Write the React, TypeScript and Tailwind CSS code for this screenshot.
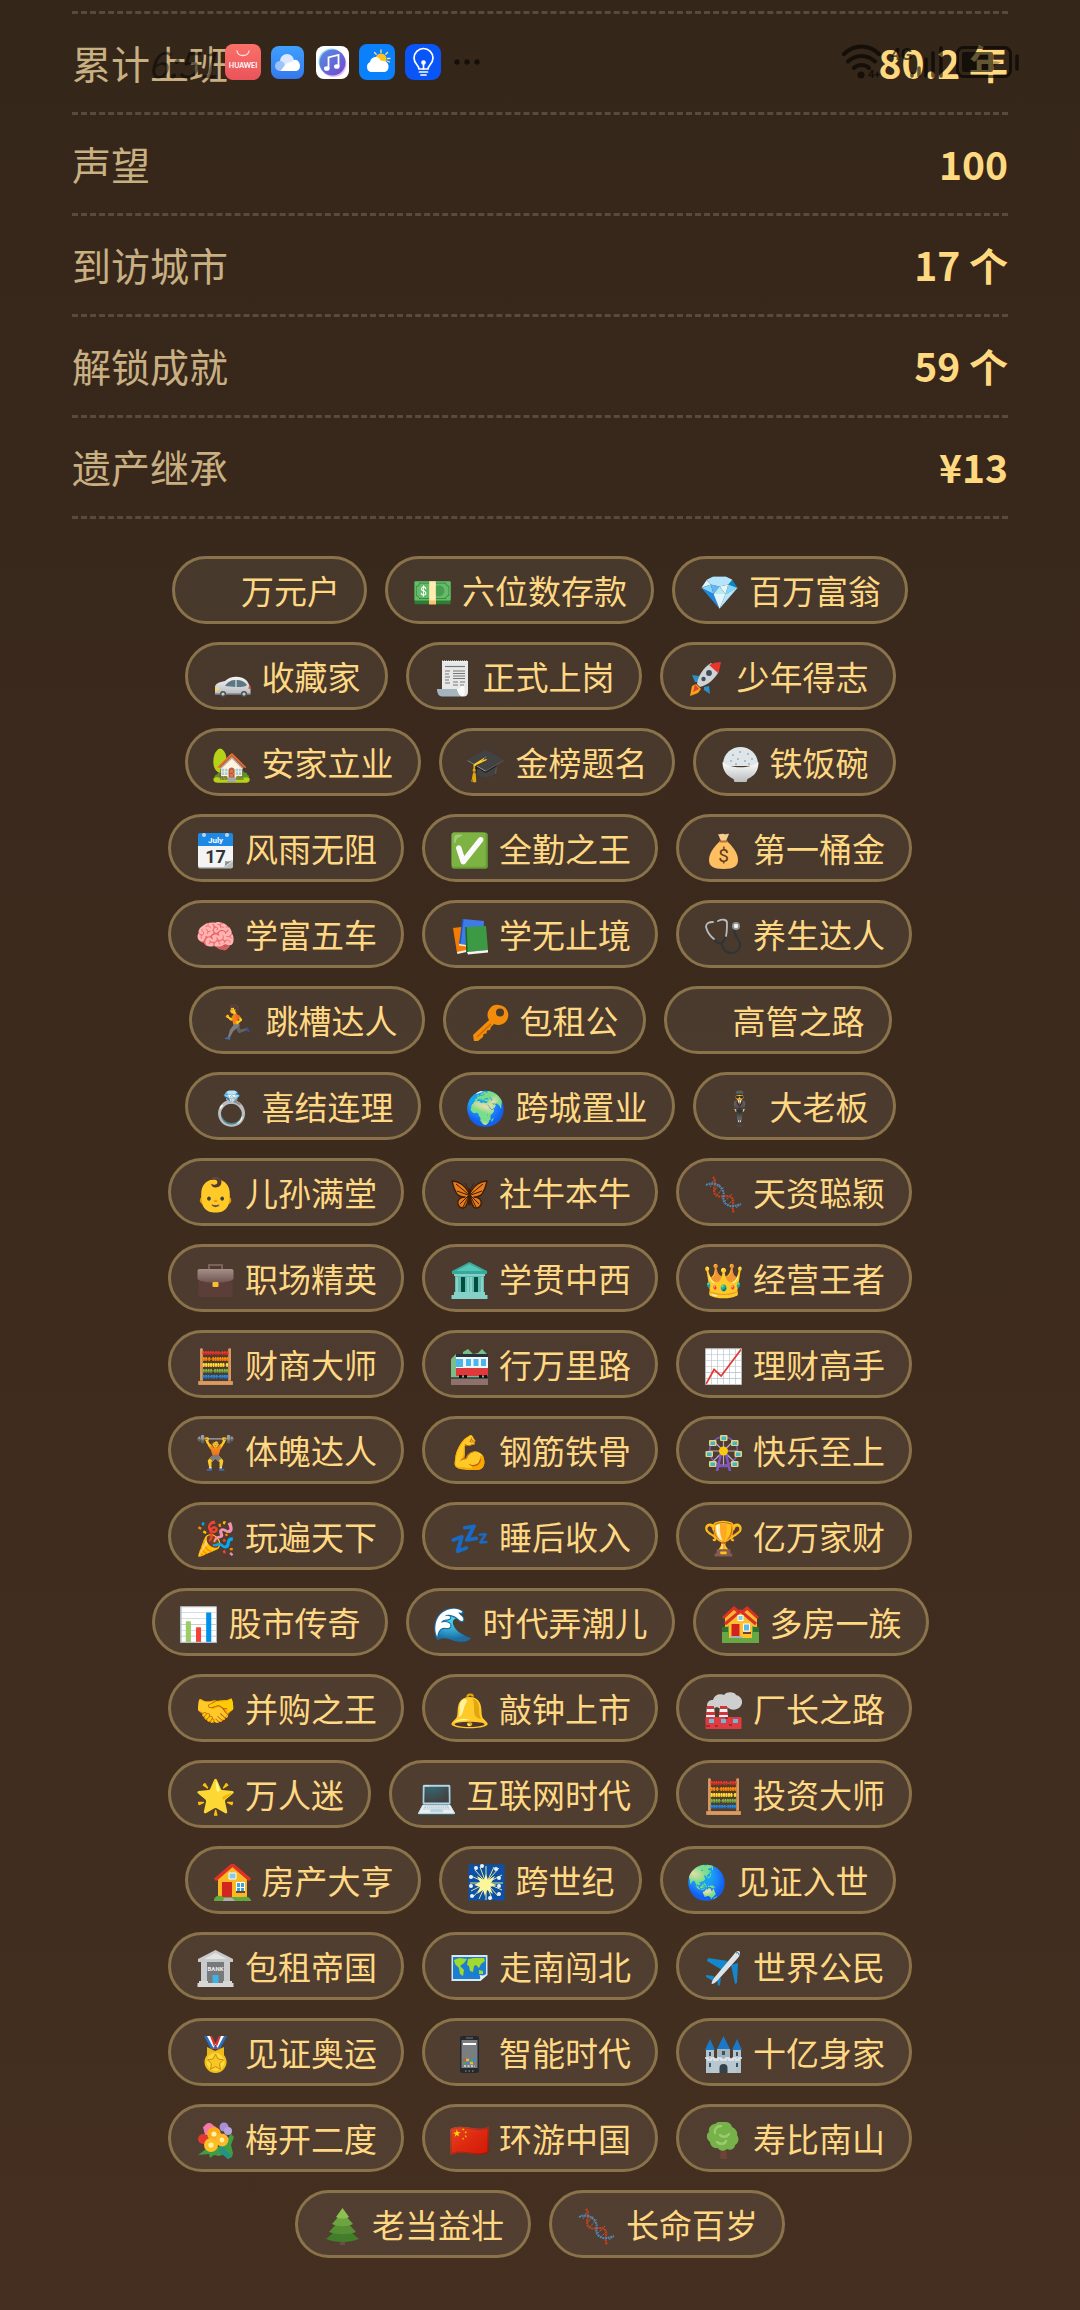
import type { ReactNode } from 'react';

const stats: [string, string][] = [
  ['累计上班', '80.2 年'],
  ['声望', '100'],
  ['到访城市', '17 个'],
  ['解锁成就', '59 个'],
  ['遗产继承', '¥13'],
];

const Art = ({ children }: { children: ReactNode }) => (
  <svg viewBox="0 0 37 37" className="size-[37px]" aria-hidden="true">
    {children}
  </svg>
);

const CarIcon = () => (
  <Art>
    <defs>
      <linearGradient id="car" x1="0" y1="0" x2="0" y2="1">
        <stop offset="0" stopColor="#f5f5f5" />
        <stop offset="1" stopColor="#b9bcc0" />
      </linearGradient>
    </defs>
    <path d="M1 34v-7c0-3 4-5 10-6 5-5 15-6 21-1 2 2 3 4 4 7l.5 2v5z" fill="url(#car)" />
    <path d="M11 26c3-5 7-6 11-6 5 0 8 1 11 5-2 2-7 2-11 2z" fill="#5c7683" />
    <path d="M22 20v7" stroke="#d9dcdf" strokeWidth="1.3" />
    <path d="M1 28l4-1v3l-4 1z" fill="#f6dc67" />
    <path d="M35 25l1.500 1v3h-2z" fill="#e05545" />
    <path d="M1 34h35.500" stroke="#85898d" strokeWidth="1.500" />
    <circle cx="9" cy="34" r="3" fill="#4d4f52" />
    <circle cx="9" cy="34" r="1.600" fill="#c9cbcd" />
    <circle cx="30" cy="34" r="3" fill="#4d4f52" />
    <circle cx="30" cy="34" r="1.600" fill="#c9cbcd" />
  </Art>
);

const PaperIcon = () => (
  <Art>
    <path d="M7 1h26v31c0 3-2 4.500-4 4.500L7 30z" fill="#e8e8e8" />
    <path d="M7 1h26" stroke="#fff" strokeWidth="1" strokeDasharray="1 1" />
    <path d="M2 29h20c1 4 3 7 7 7.500H7c-3 0-5-3-5-7.500z" fill="#a5b5be" />
    <path d="M22 29c2 0 5-2 5-6 3 2 4 12 1 13.500-4-.5-5-3.500-6-7.500z" fill="#fafafa" />
    <path d="M10 6.500h20" stroke="#777" strokeWidth="1.200" />
    <path d="M10 11h5M10 14h4M10 17h5M10 20h4M10 23h5M18 11h12M18 13.500h12M18 16h12M18 18.500h12M18 22h5M25 22h5M18 25h5M25 25h4" stroke="#777" strokeWidth="1" />
  </Art>
);

const RocketIcon = () => (
  <Art>
    <g transform="translate(-2 0)">
      <path d="M3 36l2-10 4-2 5 5-3 4z" fill="#f9a01b" />
      <path d="M6 32l2-8 4 5z" fill="#e2452f" />
      <path d="M12 16l-7-1 3 7h3zM22 26l1 8-6-4v-3z" fill="#2b8fc9" />
      <path d="M10 24c1-8 6-16 14-21l8 8c-4 8-11 14-19 16z" fill="#cfd3d6" />
      <path d="M22 5c4-2 8-3 12-3-1 4-1 7-3 11z" fill="#e8352c" />
      <circle cx="22" cy="13" r="2.900" fill="#3f4d56" />
      <circle cx="16.500" cy="19" r="2.200" fill="#3f4d56" />
    </g>
  </Art>
);

const RiceIcon = () => (
  <Art>
    <defs>
      <linearGradient id="bowl" x1="0" y1="0" x2="0" y2="1">
        <stop offset="0" stopColor="#ffffff" />
        <stop offset="1" stopColor="#b9bbbd" />
      </linearGradient>
    </defs>
    <path d="M1 17C2 7 10 1 18.500 1S35 7 36 17v3H1z" fill="#dfe6ea" />
    <path d="M10 9h2M17 6h2M25 8h2M8 15h2M15 13h2M22 15h2M29 13h2M13 18h2M26 18h2" stroke="#9fb0ba" strokeWidth="1.500" />
    <path d="M.5 16c8 7 28 7 36 0 0 9-4 14-11 17l-1 3h-12l-1-3C5 30 .5 25 .5 16z" fill="url(#bowl)" />
  </Art>
);

const CalendarIcon = () => (
  <Art>
    <rect x="1" y="3" width="35" height="33.500" rx="2" fill="#b7bbbd" />
    <path d="M1 13h35v16l-8 6H3a2 2 0 0 1-2-2z" fill="#f4f4f4" />
    <path d="M36 28l-9 7c2-3 1-5 1-6 3 1 6 0 8-1z" fill="#8b9093" />
    <path d="M1 14V3a2 2 0 0 1 2-2h31a2 2 0 0 1 2 2v11z" fill="#1e88e5" />
    <circle cx="7" cy="3" r="2" fill="#b7d7ee" />
    <circle cx="30" cy="3" r="2" fill="#b7d7ee" />
    <text x="18.500" y="10.500" textAnchor="middle" fontSize="8" fontWeight="700" fill="#fff" fontFamily="Roboto, sans-serif">July</text>
    <text x="18.500" y="31" textAnchor="middle" fontSize="18" fontWeight="700" fill="#333" fontFamily="Roboto, sans-serif">17</text>
  </Art>
);

const MoneyBagIcon = () => (
  <Art>
    <path d="M13 2c2 1 4-1 6 0s4-1 5 0l-3 7h-5z" fill="#f7cd94" />
    <path d="M15 9h7c4 4 11 11 11 19 0 6-4 9-14.500 9S4 34 4 28C4 20 11 13 15 9z" fill="#fdbf62" />
    <path d="M14.500 9.500h8" stroke="#b3742c" strokeWidth="2" />
    <text x="18.500" y="30" textAnchor="middle" fontSize="19" fill="#5d3c1c" fontFamily="Roboto, sans-serif">$</text>
  </Art>
);

const BooksIcon = () => (
  <Art>
    <path d="M2 10l8-1 6 24-10 2z" fill="#f57c00" />
    <path d="M6 34l9-2 .5 2-9 2z" fill="#eee" />
    <path d="M12 1l21 2-1 25-24-2z" fill="#3f7be8" />
    <path d="M8 26l7 1v1.500l-7-1z" fill="#eee" />
    <path d="M9 25l3-24" stroke="#2557b7" strokeWidth="1.500" />
    <path d="M15 9l20-1 2 24-21 2z" fill="#3c9a44" />
    <path d="M16 34l21-2v2.500L17 36.500z" fill="#f4f4f4" />
    <path d="M15 9l1 25" stroke="#1b6527" strokeWidth="1.500" />
  </Art>
);

const StethoscopeIcon = () => (
  <Art>
    <g fill="none" strokeLinecap="round">
      <path d="M9 21c3 6 10 6 12-3M16 25c2 6 4 10 10 10 7 0 11-6 8-12-2-4-5-6-5-14" stroke="#2f3437" strokeWidth="2.200" />
      <path d="M8 4C4 4 1 5 1 9c1 4 4 9 8 12M13 3c4-2 9-2 9 2 0 5 0 9-1 13" stroke="#b8bcbf" strokeWidth="1.800" />
      <circle cx="31" cy="8" r="4" fill="#8e9396" />
      <circle cx="31" cy="8" r="2.200" fill="#f2f2f2" />
    </g>
  </Art>
);

const KeyIcon = () => (
  <Art>
    <path d="M27 1a10 10 0 1 1-5 19l-3 3-1 3-3 .5-.5 3-3 .5-.5 3-5 4-4 .2L1 31l16-15a10 10 0 0 1 10-15z" fill="#f28c0a" />
    <circle cx="28" cy="8.500" r="4" fill="#4b3a2d" />
    <path d="M5 33l14-13" stroke="#c66a00" strokeWidth="1.200" />
  </Art>
);

const ButterflyIcon = () => (
  <Art>
    <g stroke="#3d1c0b" strokeWidth="1.300" strokeLinejoin="round">
      <path d="M18 17C14 9 7 5 1 5c1 5 3 10 5 13 2 2 5 3 8 3-5 0-8 3-7 7 1 3 3 4 5 4 4 0 5-7 6-13zM19 17c4-8 11-12 17-12-1 5-3 10-5 13-2 2-5 3-8 3 5 0 8 3 7 7-1 3-3 4-5 4-4 0-5-7-6-13z" fill="#e87c18" />
      <path d="M17 18L5 8M17 19L6 15M17 20l-8 8M17 21l-5 10M20 18L32 8M20 19l11-4M20 20l8 8M20 21l5 10" fill="none" strokeWidth="1" />
      <path d="M18.500 14v14" strokeWidth="2.600" strokeLinecap="round" />
      <path d="M18 14l-4-7M19 14l4-7" fill="none" strokeWidth=".8" />
    </g>
  </Art>
);

const DnaIcon = () => (
  <Art>
    <g fill="none" strokeWidth="2.200" strokeDasharray="2 .7">
      <path d="M5 11L9 4M10 14l5-6M12 19l7-8M20 25l7-7M23 29l6-6M31 32l4-3" stroke="#a07867" strokeWidth=".8" />
      <path d="M8 1c5 5-1 12 2 17 4 6 13-1 17 4 3 4-1 10 2 15" stroke="#cc3d1c" />
      <path d="M1 9c6-3 13-1 16 4 4 6-1 9 3 14 4 4 9 4 16 1" stroke="#4a86b8" />
    </g>
  </Art>
);

const BriefcaseIcon = () => (
  <Art>
    <defs>
      <linearGradient id="flap" x1="0" y1="0" x2="0" y2="1">
        <stop offset="0" stopColor="#a78f89" />
        <stop offset="1" stopColor="#6f5650" />
      </linearGradient>
    </defs>
    <path d="M12 8V3h13v5" fill="none" stroke="#7a615a" strokeWidth="2" />
    <path d="M1.500 13h34v20a2 2 0 0 1-2 2h-30a2 2 0 0 1-2-2z" fill="#5b3e38" />
    <path d="M.5 9a2 2 0 0 1 2-2h32a2 2 0 0 1 2 2v8c-6 5-30 5-36 0z" fill="url(#flap)" />
    <rect x="15.500" y="20" width="6" height="5" rx="1" fill="#fbc02d" />
  </Art>
);

const MuseumIcon = () => (
  <Art>
    <rect x="4" y="12" width="29" height="20" fill="#64bdb2" />
    <path d="M10 15h4v16h-4zM23 15h4v16h-4z" fill="#004d40" />
    <path d="M18.500 0L36 9v3H1V9z" fill="#35aa9c" />
    <path d="M18.500 2L32 9H5z" fill="#58c4b7" />
    <path d="M3 12h31v2H3zM3 30h31v3H3zM.5 33h36v4H.5z" fill="#85d0c7" />
    <path d="M6 15v15M17 15v15M20 15v15M31 15v15" stroke="#a4dfd8" strokeWidth="1.200" />
  </Art>
);

const TrainIcon = () => (
  <Art>
    <path d="M0 11l5-5 7 3V4l5-3 5 5 5-1 4-4 5 5v24H0z" fill="#79bd87" />
    <path d="M5 6h32v3H5z" fill="#26323a" />
    <path d="M5 9h32v12H5z" fill="#f4f6f6" />
    <path d="M5 11h7v8H5zM15 11h5v7h-5zM22.500 11h5v7h-5zM30 11h5v7h-5z" fill="#4cb5ee" />
    <path d="M5 20h32v8H5z" fill="#e0393c" />
    <path d="M0 30h37v7H0z" fill="#8f716b" />
    <path d="M0 30h37" stroke="#333e44" strokeWidth="1.500" />
    <path d="M8 28.500h3M13 28.500h3M28 28.500h3M33 28.500h3" stroke="#111" strokeWidth="3" />
  </Art>
);

const WheelIcon = () => (
  <Art>
    <circle cx="18.500" cy="17" r="14" fill="none" stroke="#7f57b5" strokeWidth="1.600" />
    <path d="M18.500 3v28M4.500 17h28M8.500 7l20 20M28.500 7l-20 20" stroke="#b9a6d2" strokeWidth="1.200" />
    <path d="M16 20l-4 17M21 20l4 17M14 32h9" stroke="#8155bd" strokeWidth="2.600" />
    {[[15, 1], [26, 6], [29.500, 17], [26, 27], [4, 6], [0.5, 17], [4, 27]].map(([x, y]) => (
      <g key={`${x}-${y}`}>
        <rect x={x} y={y} width="7.500" height="6" rx="1" fill="#e2d588" />
        <rect x={x + 1.5} y={y + 1.5} width="4.500" height="3.500" fill="#42b7bd" />
      </g>
    ))}
    <circle cx="18.500" cy="17" r="4.500" fill="#fdc90c" />
  </Art>
);

const HouseIcon = () => (
  <Art>
    <path d="M4 14L18.500 2 33 14v20H4z" fill="#fbb825" />
    <path d="M1 16L18.500 1 36 16" fill="none" stroke="#df3226" strokeWidth="3.500" />
    <rect x="8" y="18" width="10" height="16" fill="#d3261f" />
    <rect x="22" y="18" width="9" height="10" fill="#fff" />
    <path d="M23 19h3v4h-3zM27 19h3v4h-3zM23 24h3v3h-3zM27 24h3v3h-3z" fill="#3aa5dd" />
    <path d="M22 28h9" stroke="#6d4432" strokeWidth="2" />
    <path d="M15 9h7v6h-7z" fill="#7fcdea" stroke="#fff" />
    <path d="M0 36c1-5 6-5 9-3h20c3-1 7 0 8 3v1H0z" fill="#63a83c" />
    <path d="M10 34h8l3 3H9z" fill="#aab0b3" />
  </Art>
);

const HousesIcon = () => (
  <Art>
    <path d="M3 10l9-8 7 5 7-5 9 8v16H3z" fill="#f8b62b" />
    <path d="M1 12L12 2l6 5M36 12L25 2l-6 5" fill="none" stroke="#d93125" strokeWidth="3" />
    <path d="M0 22l7-2v8h23v-8l7 2v15H0z" fill="#66a944" />
    <path d="M0 21h6v5H0zM31 21h6v5h-6z" fill="#2e7131" />
    <path d="M7 16L18.500 6 30 16v16H7z" fill="#fec02e" />
    <path d="M3 18L18.500 5 34 18" fill="none" stroke="#d93125" strokeWidth="3" />
    <rect x="9.500" y="18" width="8" height="13" fill="#d0251e" />
    <rect x="21.500" y="18" width="6" height="7" fill="#5cbbe5" stroke="#fff" />
    <rect x="16" y="9.500" width="5" height="5" fill="#7fcdea" stroke="#fff" />
    <path d="M21 27h8" stroke="#6d4432" strokeWidth="2" />
    <path d="M9 30h10l2 2H8z" fill="#aab0b3" />
  </Art>
);

const FactoryIcon = () => (
  <Art>
    <path d="M2 14c0-5 3-6 6-6 2-7 9-6 11-5 3-4 11-3 12 0 6 1 8 8 4 12-4 4-10 3-13 0-5 3-8 1-10 0-4 2-9 2-10-1z" fill="#cfcfcf" />
    <path d="M2 14h7l1 11H1zM15 14h7l1 11h-9z" fill="#f4f1f1" />
    <path d="M2 14h7v3H2zM1 20h9v3H1zM15 14h7v3h-7zM14 20h9v3h-9z" fill="#cf353b" />
    <rect x=".5" y="25" width="36" height="12" rx="1" fill="#df3c42" />
    <path d="M4 27h5v4H4zM16 27h5v4h-5zM28 27h5v4h-5z" fill="#6fb7dc" />
    <path d="M10 34h3M20 26h3M24 33h3M1 34h4" stroke="#9e1f28" strokeWidth="1.300" />
  </Art>
);

const SparklerIcon = () => (
  <Art>
    <rect x=".5" y=".5" width="36" height="36" fill="#0c50a8" />
    <path d="M18 2v34M2 19h33M7 6l23 26M31 4L5 33M12 3l12 32M26 3L11 35M3 12l31 14M34 11L3 27" stroke="#e8e690" strokeWidth="1" />
    <path d="M18 10l2 6 7-4-4 7 6 2-7 2 3 7-6-4-2 6-2-6-6 4 3-7-6-2 6-3-3-6 7 4z" fill="#fbf59b" />
    {[[8, 4], [28, 5], [3, 13], [31, 14], [3, 22], [31, 22], [4, 32], [31, 30], [22, 34], [14, 2]].map(([x, y]) => (
      <circle key={`${x}-${y}`} cx={x} cy={y} r="2" fill="#e9f4ff" />
    ))}
  </Art>
);

const BankIcon = () => (
  <Art>
    <path d="M18.500 0L36 9v3H1V9z" fill="#c7c9ca" />
    <path d="M18.500 3L30 9H7z" fill="#e2e3e3" />
    <rect x="4" y="12" width="29" height="21" fill="#77797b" />
    <path d="M4 12h6v20H4zM27 12h6v20h-6z" fill="#c9cbcc" />
    <text x="18.500" y="21" textAnchor="middle" fontSize="6" fontWeight="700" fill="#eee" fontFamily="Roboto, sans-serif">BANK</text>
    <rect x="15.500" y="25" width="6" height="8" fill="#41b2e6" />
    <path d="M2 31h9v3H2zM26 31h9v3h-9zM.5 33h36v4H.5z" fill="#d6d8d8" />
  </Art>
);

const MapIcon = () => (
  <Art>
    <path d="M.5 5h36v20l-7 6H.5z" fill="#d7e8f4" />
    <path d="M2 7h33v17l-6 5H2z" fill="#1c7ed0" />
    <path d="M3 10l5-2 8 1-3 4-4 3 4 4-1 6-3-2-1-6-4-4zM17 9l6-1h10l1 3-4 3-2 4-3-3-2 1-1 6-3-1-1-5-2-1zM28 20l4 1v3h-4z" fill="#a2d92d" />
    <path d="M36.500 24l-8 7c1-3 1-4 0-6 4 1 6 0 8-1z" fill="#eaf1f5" />
  </Art>
);

const PlaneIcon = () => (
  <Art>
    <path d="M23 11L3 8l-1 3 15 9zM26 15l4 19 2-1 1-20zM9 26l-8-1v2l7 4zM12 29l1 7 2-1 1-7z" fill="#1587cc" />
    <path d="M30 3c3-3 5-2 5 0s-1 4-3 6L13 30c-3 3-5 4-6 4s0-3 2-6z" fill="#dce4e9" />
    <path d="M31 3c2-1 3 0 3 2" stroke="#2d6b90" strokeWidth="1" fill="none" />
  </Art>
);

const MedalIcon = () => (
  <Art>
    <path d="M7 0h6l7 13h-6z" fill="#276fc0" />
    <path d="M30 0h-6l-7 13h6z" fill="#276fc0" />
    <path d="M10 0h4l7 13h-4zM27 0h-4l-7 13h4z" fill="#fff" />
    <path d="M13 0h2l6 13h-3zM24 0h-2l-6 13h3z" fill="#dc3434" />
    <path d="M10 11l8 4 9-4v8H10z" fill="#eeb818" />
    <circle cx="18.500" cy="26" r="11" fill="#f2bd18" />
    <circle cx="18.500" cy="26" r="9" fill="#fbd83b" />
    <path d="M18.500 18l2.500 5 5.500.8-4 4 1 5.500-5-2.600-5 2.600 1-5.500-4-4 5.500-.8z" fill="#f9c722" stroke="#c98a13" />
  </Art>
);

const PhoneIcon = () => (
  <Art>
    <rect x="9" y="0" width="19" height="37" rx="2.500" fill="#26292b" />
    <rect x="10.500" y="4" width="16" height="28" fill="#7b7e80" />
    <path d="M12 7h13v2H12z" fill="#fff" />
    <path d="M15 2h7" stroke="#777" strokeWidth="1" />
    <path d="M12 24h3" stroke="#e34b3c" strokeWidth="2.500" />
    <path d="M15 24h3M19 27h3" stroke="#f2b632" strokeWidth="2.500" />
    <path d="M19 24h3M12 27h3" stroke="#3ea85a" strokeWidth="2.500" />
    <path d="M22 24h3M15.500 27h3" stroke="#3b88dd" strokeWidth="2.500" />
    <path d="M13 30h11" stroke="#ddd" strokeWidth="1.500" strokeDasharray="2 1.500" />
    <path d="M14 35h9" stroke="#999" strokeWidth="1" strokeDasharray="1.500 2" />
  </Art>
);

const CastleIcon = () => (
  <Art>
    <path d="M1 13h8v24H1zM28 13h8v24h-8z" fill="#b3c3cc" />
    <path d="M12 13h13v24H12z" fill="#a0b3bd" />
    <path d="M6 22h25v15H6z" fill="#b9c8d0" />
    <path d="M0 14L5 3l5 11zM12 13l6.500-13L25 13zM27 14l5-11 5 11z" fill="#1a78c8" />
    <path d="M0 22h3v2h3v-2h3v2h4v-2h3v2h5v-2h3v2h4v-2h3v2h3v-2h3" fill="none" stroke="#e1e9ed" strokeWidth="1.500" />
    <path d="M4 16h2v4H4zM17 15h3v4h-3zM31 16h2v4h-2zM4 27h2v4H4zM31 27h2v4h-2z" fill="#3a5361" />
    <path d="M14.500 37v-5a4 4 0 0 1 8 0v5z" fill="#33434c" />
  </Art>
);

const BouquetIcon = () => (
  <Art>
    <path d="M1 33l8-6 16-3 9-12 3 3-3 8 2 8-1 4-4 2-3-5-6 2-5-1-4 3-1-4z" fill="#3f9d45" />
    <path d="M24 23l11 11-4 3-9-7z" fill="#249384" />
    <circle cx="12" cy="6" r="5" fill="#f0639a" />
    <path d="M6 5l6-4 7 4-2 8H8z" fill="#f37aa8" />
    <circle cx="27" cy="5" r="4.500" fill="#a98ed8" />
    <circle cx="31" cy="9" r="4" fill="#b7a2e0" />
    <circle cx="6" cy="17" r="5" fill="#e2382f" />
    <circle cx="17" cy="12" r="7" fill="#fca91b" />
    <circle cx="25" cy="18" r="6.500" fill="#fdb92b" />
    <circle cx="14" cy="23" r="7" fill="#fdbf25" />
    <circle cx="17" cy="12" r="2.600" fill="#fff3a5" />
    <circle cx="25" cy="18" r="2.400" fill="#fff3a5" />
    <circle cx="14" cy="23" r="2.600" fill="#fff3a5" />
  </Art>
);

const TreeIcon = () => (
  <Art>
    <path d="M16 23h5l1 14h-7z" fill="#6d4336" />
    <path d="M18 0c6-1 9 3 9 5 4 2 6 5 5 8 3 4 1 9-2 10 0 4-5 6-8 4-3 3-8 2-9-1-5 1-8-3-8-6-4-3-4-8-1-10-1-5 3-8 6-8 2-2 5-3 8-2z" fill="#76b14a" />
    <path d="M16 4c-4 0-7 3-6 7M24 12c-3 4-7 3-9 1M12 20c3 3 8 2 9-1" fill="none" stroke="#9bcb6b" strokeWidth="2.500" strokeLinecap="round" />
  </Art>
);

const PineIcon = () => (
  <Art>
    <path d="M16 30h5v7h-5z" fill="#6d4c41" />
    <path d="M18.500 17L35 31c-9 4-24 4-33 0z" fill="#427d2a" />
    <path d="M18.500 9L32 24c-8 3-19 3-27 0z" fill="#568f33" />
    <path d="M18.500 4L29 16c-6 3-15 3-21 0z" fill="#6ca540" />
    <path d="M18.500 0L25 9c-4 2-9 2-13 0z" fill="#8cc152" />
  </Art>
);

const BlankIcon = () => <span className="w-[42px]" />;

const Emoji = ({ children }: { children: ReactNode }) => (
  <span className="w-[50px] pt-1 font-['Noto_Color_Emoji',sans-serif]">{children}</span>
);

type Badge = [ReactNode, string];

const badges: Badge[] = [
  [null, '万元户'],
  ['💵', '六位数存款'],
  ['💎', '百万富翁'],
  [<CarIcon />, '收藏家'],
  [<PaperIcon />, '正式上岗'],
  [<RocketIcon />, '少年得志'],
  ['🏡', '安家立业'],
  ['🎓', '金榜题名'],
  [<RiceIcon />, '铁饭碗'],
  [<CalendarIcon />, '风雨无阻'],
  ['✅', '全勤之王'],
  [<MoneyBagIcon />, '第一桶金'],
  ['🧠', '学富五车'],
  [<BooksIcon />, '学无止境'],
  [<StethoscopeIcon />, '养生达人'],
  ['🏃', '跳槽达人'],
  [<KeyIcon />, '包租公'],
  [null, '高管之路'],
  ['💍', '喜结连理'],
  ['🌍', '跨城置业'],
  ['🕴️', '大老板'],
  ['👶', '儿孙满堂'],
  [<ButterflyIcon />, '社牛本牛'],
  [<DnaIcon />, '天资聪颖'],
  [<BriefcaseIcon />, '职场精英'],
  [<MuseumIcon />, '学贯中西'],
  ['👑', '经营王者'],
  ['🧮', '财商大师'],
  [<TrainIcon />, '行万里路'],
  ['📈', '理财高手'],
  ['🏋️', '体魄达人'],
  ['💪', '钢筋铁骨'],
  [<WheelIcon />, '快乐至上'],
  ['🎉', '玩遍天下'],
  ['💤', '睡后收入'],
  ['🏆', '亿万家财'],
  ['📊', '股市传奇'],
  ['🌊', '时代弄潮儿'],
  [<HousesIcon />, '多房一族'],
  ['🤝', '并购之王'],
  ['🔔', '敲钟上市'],
  [<FactoryIcon />, '厂长之路'],
  ['🌟', '万人迷'],
  ['💻', '互联网时代'],
  ['🧮', '投资大师'],
  [<HouseIcon />, '房产大亨'],
  [<SparklerIcon />, '跨世纪'],
  ['🌏', '见证入世'],
  [<BankIcon />, '包租帝国'],
  [<MapIcon />, '走南闯北'],
  [<PlaneIcon />, '世界公民'],
  [<MedalIcon />, '见证奥运'],
  [<PhoneIcon />, '智能时代'],
  [<CastleIcon />, '十亿身家'],
  [<BouquetIcon />, '梅开二度'],
  ['🇨🇳', '环游中国'],
  [<TreeIcon />, '寿比南山'],
  [<PineIcon />, '老当益壮'],
  [<DnaIcon />, '长命百岁'],
];

function BadgeIcon({ icon }: { icon: ReactNode }) {
  if (icon === null) return <BlankIcon />;
  if (typeof icon === 'string') return <Emoji>{icon}</Emoji>;
  return <span className="w-[50px] pt-1 pl-[2px]">{icon}</span>;
}

function StatusBar() {
  return (
    <div className="absolute inset-x-0 top-0 flex h-[124px] items-center justify-between pr-[60px] pl-[148px]">
      <div className="flex items-center">
        <span className="w-[77px] text-[36px] leading-none text-black/50 italic">6:51</span>
        <div className="flex items-center gap-[10px]">
          <svg viewBox="0 0 36 36" className="size-9">
            <defs>
              <linearGradient id="store" x1="0" y1="0" x2="0" y2="1">
                <stop offset="0" stopColor="#fb7069" />
                <stop offset="1" stopColor="#e9545b" />
              </linearGradient>
            </defs>
            <rect width="36" height="36" rx="8" fill="url(#store)" />
            <path d="M12 7c1 6 11 6 12 0" fill="none" stroke="#ffe1df" strokeWidth="1.300" strokeLinecap="round" />
            <text x="18" y="24" textAnchor="middle" fontSize="7" fontWeight="700" fill="#fff" fontFamily="Lato, sans-serif">HUAWEI</text>
          </svg>
          <svg viewBox="0 0 33 33" className="size-[33px]">
            <defs>
              <linearGradient id="cloud" x1="0" y1="0" x2="0" y2="1">
                <stop offset="0" stopColor="#3fa0ff" />
                <stop offset="1" stopColor="#3478ee" />
              </linearGradient>
            </defs>
            <rect width="33" height="33" rx="8" fill="url(#cloud)" />
            <circle cx="16" cy="15" r="7" fill="#d7e8ff" />
            <circle cx="9" cy="20" r="5" fill="#9cc4fb" />
            <path d="M9 25c3-1 4-9 12-9 3-5 8-1 8 4 0 3-2 5-5 5z" fill="#fff" />
          </svg>
          <svg viewBox="0 0 33 33" className="ml-[2px] size-[33px]">
            <defs>
              <linearGradient id="music" x1="0" y1="0" x2="1" y2="1">
                <stop offset="0" stopColor="#5a8de0" />
                <stop offset="1" stopColor="#6a4bd0" />
              </linearGradient>
            </defs>
            <rect width="33" height="33" rx="8" fill="#fff" />
            <circle cx="17.500" cy="18" r="13" fill="#f3b5ef" />
            <circle cx="15.500" cy="15.500" r="13" fill="#8fdcf5" />
            <circle cx="16.500" cy="16.500" r="13" fill="url(#music)" />
            <path d="M12.500 22V11.500l10-2.500v11" fill="none" stroke="#fff" strokeWidth="1.800" />
            <ellipse cx="10.800" cy="22.500" rx="2.800" ry="2.300" fill="#fff" />
            <ellipse cx="20.800" cy="20.500" rx="2.800" ry="2.300" fill="#fff" />
          </svg>
          <svg viewBox="0 0 36 36" className="size-9">
            <rect width="36" height="36" rx="8" fill="#0a80fb" />
            <circle cx="22" cy="15" r="5.500" fill="#ffc31f" />
            <path d="M22 6v2.500M15.500 8.500l1.700 1.700M28.500 8.500l-1.700 1.700M28.500 14.500h2.500M28 17l2.500 1" stroke="#ffe08a" strokeWidth="1.300" strokeLinecap="round" />
            <path d="M11.500 28a5.500 5.500 0 0 1-.5-10c1-6 9-7 11-1 5-1 8 3 7.500 6 0 3-2 5-5 5z" fill="#fff" />
          </svg>
          <svg viewBox="0 0 36 36" className="size-9" fill="none" stroke="#fff" strokeWidth="1.700" strokeLinecap="round">
            <rect width="36" height="36" rx="9" fill="#0a55f7" stroke="none" />
            <path d="M14 25c0-4-5-5-5-11a9.500 9.500 0 0 1 19 0c0 6-5 7-5 11z" />
            <path d="M14.500 28h8M16 31h5M18.500 25v-6" />
            <circle cx="18.500" cy="18.500" r="1.500" fill="#fff" />
          </svg>
          <svg viewBox="0 0 26 6" className="ml-[3px] h-[6px] w-[26px] fill-black/60">
            <circle cx="3" cy="3" r="2.700" />
            <circle cx="13" cy="3" r="2.700" />
            <circle cx="23" cy="3" r="2.700" />
          </svg>
        </div>
      </div>
      <svg viewBox="0 0 178 36" className="h-9 w-[178px] opacity-60" fill="none" stroke="#000" strokeLinecap="round" fontFamily="Roboto, sans-serif" fontWeight="700">
        <path d="M2 10c10-10 25-10 35 0M6 17.500c8-7.500 19-7.500 27 0M12 24c4-4 11-4 15 0" strokeWidth="4" />
        <circle cx="19" cy="31" r="3.500" fill="#000" stroke="none" />
        <text x="26" y="34" fontSize="11" fill="#000" stroke="none">4+</text>
        <text x="49" y="16" fontSize="17" fill="#000" stroke="none">4G</text>
        <path d="M70 30v2M77 24v8M84 15v17M91 9v23M99 4v28" strokeWidth="3.500" />
        <rect x="115.500" y="3.500" width="53" height="29" rx="6" strokeWidth="3" />
        <rect x="120" y="8" width="31" height="20" rx="2" fill="#000" stroke="none" />
        <path d="M128 19l14-10-1 7 18 2-15 9 1-7z" fill="#000" stroke="none" opacity="0.5" />
        <path d="M175 12v13" strokeWidth="3.500" />
      </svg>
    </div>
  );
}

export default function App() {
  return (
    <main className="relative min-h-screen bg-linear-to-b from-[#35261a] to-[#442f20] px-[72px] pt-[11px] pb-[52px] font-['Noto_Sans_CJK_SC',sans-serif]">
      <dl className="border-t-3 border-dashed border-[#594a3d]">
        {stats.map(([label, value]) => (
          <div key={label} className="flex h-[101px] items-center justify-between border-b-3 border-dashed border-[#594a3d] pb-[2px] text-[39px]">
            <dt className="text-[#c8b083]">{label}</dt>
            <dd className="font-bold text-[#ffd97f]">{value}</dd>
          </div>
        ))}
      </dl>
      <ul className="mt-[37px] flex flex-wrap justify-center gap-[18px]">
        {badges.map(([icon, name]) => (
          <li key={name} className="flex h-[68px] items-center rounded-full border-3 border-[#8a734b] bg-white/8 px-6 text-[33px] leading-none text-[#ffd883]">
            <BadgeIcon icon={icon} />
            {name}
          </li>
        ))}
      </ul>
      <StatusBar />
    </main>
  );
}
